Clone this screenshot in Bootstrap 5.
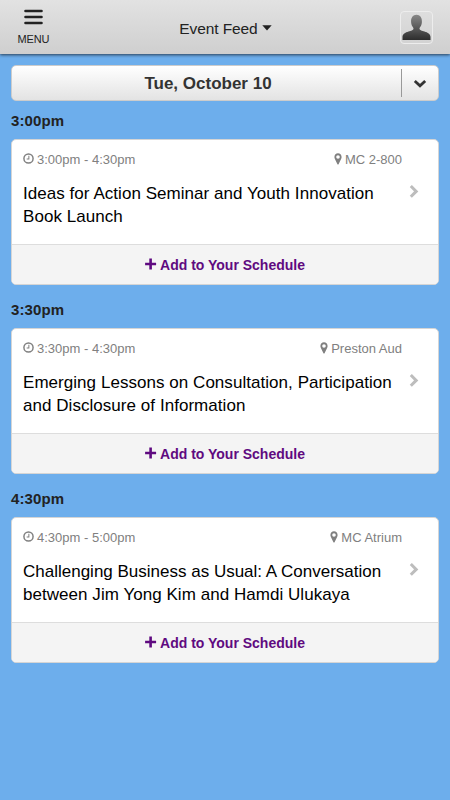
<!DOCTYPE html>
<html lang="en">
<head>
<meta charset="utf-8">
<meta name="viewport" content="width=device-width, initial-scale=1">
<title>Event Feed</title>
<link href="https://cdn.jsdelivr.net/npm/bootstrap@5.3.0/dist/css/bootstrap.min.css" rel="stylesheet">
<style>
body{font-family:"Liberation Sans",Arial,sans-serif;background:#6daeec;color:#222;min-height:800px;overflow-x:hidden}
svg{display:block;flex:none}
.topbar{height:54px;background:linear-gradient(#e2e2e2,#cfcfcf);box-shadow:0 1px 3px rgba(0,0,0,.65)}
.side{width:67px}
.menu-btn{font-size:11px;line-height:12px;color:#222;padding-top:9px;letter-spacing:-.15px}
.menu-btn span{margin-top:8px}
.feed-title{font-size:15.5px;line-height:20px;padding:4px 0 0 1px;color:#222;letter-spacing:-.1px}
.feed-title svg{margin-bottom:2px}
.avatar{width:33px;height:33px;margin-right:17px;border:1px solid #ededed;border-radius:4px}
.feed{padding:11px 11px 0}
.datebar{height:36px;border:1px solid #ccc;border-radius:5px;background:linear-gradient(#fff,#e3e3e3)}
.date-label{font-size:17px;color:#333;line-height:34px;padding:2px 0 0 3px}
.date-toggle{width:37px;height:28px;border-left:1px solid #999}
.date-toggle svg{margin-top:2px}
.slot-time{font-size:15px;line-height:20px;color:#222;margin:10px 0 8px;letter-spacing:.1px}
.slot{margin-bottom:15px}
.event{height:146px;border:1px solid #d5d5d5;border-radius:5px;overflow:hidden;color:#000}
.event-main{height:104px;padding:11px 11px 0}
.meta{font-size:13px;line-height:18px;color:#808080;padding-right:25px}
.meta svg{margin-top:2px}
.meta-time svg{margin-right:3px}
.meta-place svg{margin-right:3px}
.event-title{font-size:17px;line-height:23px;margin:13px 0 0;font-weight:400;white-space:nowrap}
.snug{letter-spacing:.045px}
.go{margin:15px 8px 0 0}
.event-add{height:40px;background:#f4f4f4;border-top:1px solid #ddd;color:#5f0a80;font-size:14px;flex:1}
.event-add svg{margin:-2px 3px 0 0}
.event-add span{padding-top:1px}
</style>
<script src="https://cdn.jsdelivr.net/npm/bootstrap@5.3.0/dist/js/bootstrap.bundle.min.js"></script>
</head>
<body>
<svg width="0" height="0" class="position-absolute" aria-hidden="true">
<defs>
<symbol id="clock" viewBox="0 0 12 12"><circle cx="6" cy="6" r="5" fill="none" stroke="#808080" stroke-width="1.6"/><path d="M6.400 3v3.500H4" fill="none" stroke="#808080" stroke-width="1.1"/></symbol>
<symbol id="pin" viewBox="0 0 8 12"><path fill="#808080" fill-rule="evenodd" d="M4 .3C1.900.3.4 1.900.4 4c0 .8.200 1.300.5 1.900L3.300 11c.3.700 1.100.700 1.400 0l2.400-5.100c.3-.6.500-1.100.5-1.900C7.600 1.900 6.100.3 4 .3zM4 2.200a1.800 1.800 0 1 1 0 3.600 1.800 1.800 0 0 1 0-3.600z"/></symbol>
<symbol id="next" viewBox="0 0 10 14"><path d="M1.800 2 7.200 7.400l-5.400 5.400" fill="none" stroke="#bdbdbd" stroke-width="3"/></symbol>
<symbol id="plus" viewBox="0 0 12 12"><path d="M5.600 .5v11M.1 6h11" fill="none" stroke="#5f0a80" stroke-width="2.600"/></symbol>
</defs>
</svg>

<header class="topbar d-flex justify-content-between align-items-center position-relative">
  <a href="#" class="menu-btn side h-100 d-flex flex-column align-items-center text-decoration-none">
    <svg width="19" height="16" viewBox="0 0 19 16"><path d="M1.500 2h16M1.500 8h16M1.500 14h16" stroke="#222" stroke-width="2.600" stroke-linecap="round"/></svg>
    <span>MENU</span>
  </a>
  <a href="#" class="feed-title d-flex align-items-center text-decoration-none"><span>Event Feed</span>
    <svg class="ms-1" width="10" height="6" viewBox="0 0 10 6"><path d="M.3.300h9.400L5 5.500z" fill="#222"/></svg>
  </a>
  <div class="side d-flex justify-content-end">
    <div class="avatar d-flex justify-content-center align-items-end">
      <svg width="29" height="29" viewBox="0 0 29 29"><defs><linearGradient id="shade" x2="0" y2="1"><stop stop-color="#888"/><stop offset="1" stop-color="#2d2d2d"/></linearGradient></defs><path fill="url(#shade)" d="M.5 26v-3c0-3 2.800-4.700 6-5.600 2.500-.7 4.700-1.200 5-2.500.2-1-.700-1.800-1.400-3-.5-1-.9-2.100-1-4C8.800 4 10.800.8 14.500.8S20.200 4 19.900 7.900c-.1 1.900-.5 3-1 4-.7 1.200-1.600 2-1.400 3 .3 1.300 2.500 1.800 5 2.500 3.200.9 6 2.600 6 5.600v3z"/></svg>
    </div>
  </div>
</header>

<main class="feed">
  <div class="datebar d-flex align-items-center">
    <div class="date-label flex-fill text-center fw-bold">Tue, October 10</div>
    <div class="date-toggle d-flex align-items-center justify-content-center"><svg width="14" height="10" viewBox="0 0 14 10"><path d="M1.800 2 7 6.800 12.200 2" fill="none" stroke="#333" stroke-width="2.800"/></svg></div>
  </div>

  <section class="slot">
    <h2 class="slot-time fw-bold">3:00pm</h2>
    <article class="event bg-white d-flex flex-column">
      <div class="event-main">
        <div class="meta d-flex justify-content-between">
          <span class="meta-time d-flex"><svg width="11" height="11"><use href="#clock"/></svg><span>3:00pm - 4:30pm</span></span>
          <span class="meta-place d-flex"><svg width="8" height="12"><use href="#pin"/></svg><span>MC 2-800</span></span>
        </div>
        <div class="d-flex justify-content-between">
          <h3 class="event-title"><span class="snug">Ideas for Action Seminar and Youth Innovation</span><br><span class="snug">Book Launch</span></h3>
          <svg class="go" width="10" height="14"><use href="#next"/></svg>
        </div>
      </div>
      <a href="#" class="event-add d-flex align-items-center justify-content-center fw-bold text-decoration-none"><svg width="12" height="12"><use href="#plus"/></svg><span>Add to Your Schedule</span></a>
    </article>
  </section>

  <section class="slot">
    <h2 class="slot-time fw-bold">3:30pm</h2>
    <article class="event bg-white d-flex flex-column">
      <div class="event-main">
        <div class="meta d-flex justify-content-between">
          <span class="meta-time d-flex"><svg width="11" height="11"><use href="#clock"/></svg><span>3:30pm - 4:30pm</span></span>
          <span class="meta-place d-flex"><svg width="8" height="12"><use href="#pin"/></svg><span>Preston Aud</span></span>
        </div>
        <div class="d-flex justify-content-between">
          <h3 class="event-title"><span class="snug">Emerging Lessons on Consultation, Participation</span><br><span class="snug">and Disclosure of Information</span></h3>
          <svg class="go" width="10" height="14"><use href="#next"/></svg>
        </div>
      </div>
      <a href="#" class="event-add d-flex align-items-center justify-content-center fw-bold text-decoration-none"><svg width="12" height="12"><use href="#plus"/></svg><span>Add to Your Schedule</span></a>
    </article>
  </section>

  <section class="slot">
    <h2 class="slot-time fw-bold">4:30pm</h2>
    <article class="event bg-white d-flex flex-column">
      <div class="event-main">
        <div class="meta d-flex justify-content-between">
          <span class="meta-time d-flex"><svg width="11" height="11"><use href="#clock"/></svg><span>4:30pm - 5:00pm</span></span>
          <span class="meta-place d-flex"><svg width="8" height="12"><use href="#pin"/></svg><span>MC Atrium</span></span>
        </div>
        <div class="d-flex justify-content-between">
          <h3 class="event-title"><span>Challenging Business as Usual: A Conversation</span><br><span class="snug">between Jim Yong Kim and Hamdi Ulukaya</span></h3>
          <svg class="go" width="10" height="14"><use href="#next"/></svg>
        </div>
      </div>
      <a href="#" class="event-add d-flex align-items-center justify-content-center fw-bold text-decoration-none"><svg width="12" height="12"><use href="#plus"/></svg><span>Add to Your Schedule</span></a>
    </article>
  </section>
</main>
</body>
</html>
